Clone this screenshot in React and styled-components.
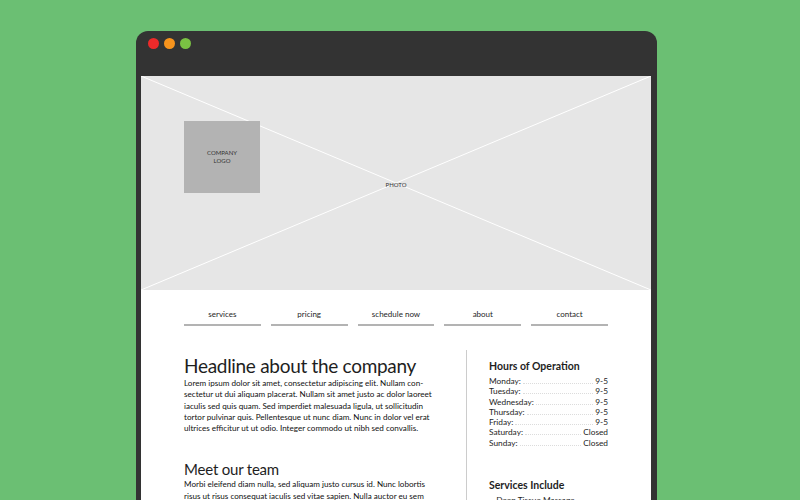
import React from "react";
import styled, { createGlobalStyle } from "styled-components";

const Global = createGlobalStyle`
  html, body {
    margin: 0;
    padding: 0;
    background: #6bbf73;
    overflow: hidden;
  }
  body {
    font-family: Lato, "Open Sans", sans-serif;
    color: #1e1e1e;
  }
`;

const Page = styled.div`
  width: 800px;
  height: 500px;
  padding: 31px 0 0 136px;
  box-sizing: border-box;
`;

const Browser = styled.div`
  width: 521px;
  height: 480px;
  background: #333333;
  border-radius: 12px 12px 0 0;
  padding: 0 6px 0 5px;
  box-sizing: border-box;
  display: flex;
  flex-direction: column;
`;

const TitleBar = styled.div`
  height: 45px;
  display: flex;
  align-items: flex-start;
  gap: 5px;
  padding: 7px 0 0 7px;
  box-sizing: border-box;
`;

const Dot = styled.span`
  width: 11px;
  height: 11px;
  border-radius: 50%;
  background: ${(p) => p.color};
`;

const Screen = styled.div`
  flex: 1;
  background: #fff;
  overflow: hidden;
`;

const Hero = styled.div`
  position: relative;
  height: 214px;
  background: #e6e6e6;
  padding: 45px 0 0 43px;
  box-sizing: border-box;
`;

const Cross = styled.svg`
  position: absolute;
  inset: 0;
  width: 100%;
  height: 100%;
`;

const Logo = styled.div`
  position: relative;
  width: 76px;
  height: 72px;
  background: #b3b3b3;
  display: flex;
  align-items: center;
  justify-content: center;
  text-align: center;
  font-size: 6px;
  line-height: 8px;
  color: #333;
`;

const PhotoLabel = styled.span`
  position: absolute;
  left: 50%;
  top: 105px;
  transform: translateX(-50%);
  font-size: 6px;
  color: #333;
`;

const Nav = styled.nav`
  display: flex;
  gap: 10px;
  padding: 19px 43px 0;
`;

const NavItem = styled.div`
  width: 77px;
  text-align: center;
  font-size: 8px;
  line-height: 10px;
  padding-bottom: 5px;
  border-bottom: 2px solid #b3b3b3;
`;

const Content = styled.div`
  display: flex;
  padding: 24px 43px 0;
`;

const Main = styled.div`
  width: 246px;
  padding: 5px 36px 0 0;
  border-right: 1px solid #cccccc;
`;

const Side = styled.div`
  width: 120px;
  padding: 10px 0 0 22px;
`;

const Headline = styled.h1`
  margin: 0;
  font-weight: 400;
  font-size: 19px;
  letter-spacing: -0.3px;
  line-height: 22px;
  white-space: nowrap;
`;

const SubHead = styled.h2`
  margin: 26px 0 0;
  font-weight: 400;
  font-size: 15px;
  letter-spacing: -0.2px;
  line-height: 18px;
  white-space: nowrap;
`;

const Body = styled.p`
  margin: 1px 0 0;
  font-size: 8.1px;
  line-height: 11.3px;
  white-space: nowrap;
  color: #111;
`;

const SideTitle = styled.h3`
  margin: 0 0 3px;
  font-weight: 700;
  font-size: 10.5px;
  line-height: 13px;
`;

const Hours = styled.div`
  display: flex;
  flex-direction: column;
`;

const HourRow = styled.div`
  display: flex;
  align-items: baseline;
  font-size: 8.3px;
  line-height: 10.3px;
`;

const Leader = styled.span`
  flex: 1;
  margin: 0 2px;
  border-bottom: 1px dotted #dcdcdc;
`;

const ServicesTitle = styled(SideTitle)`
  margin-top: 31px;
`;

const ServiceItem = styled.div`
  font-size: 8.3px;
  line-height: 10px;
  padding-left: 2px;
`;

const hours = [
  ["Monday:", "9-5"],
  ["Tuesday:", "9-5"],
  ["Wednesday:", "9-5"],
  ["Thursday:", "9-5"],
  ["Friday:", "9-5"],
  ["Saturday:", "Closed"],
  ["Sunday:", "Closed"],
];

const navItems = ["services", "pricing", "schedule now", "about", "contact"];

export default function App() {
  return (
    <Page>
      <Global />
      <Browser>
        <TitleBar>
          <Dot color="#ed2a2a" />
          <Dot color="#f7941d" />
          <Dot color="#7ac143" />
        </TitleBar>
        <Screen>
          <Hero>
            <Cross viewBox="0 0 510 214" preserveAspectRatio="none">
              <line x1="0" y1="0" x2="510" y2="214" stroke="#fff" strokeWidth="1" />
              <line x1="510" y1="0" x2="0" y2="214" stroke="#fff" strokeWidth="1" />
            </Cross>
            <Logo>
              COMPANY
              <br />
              LOGO
            </Logo>
            <PhotoLabel>PHOTO</PhotoLabel>
          </Hero>
          <Nav>
            {navItems.map((n) => (
              <NavItem key={n}>{n}</NavItem>
            ))}
          </Nav>
          <Content>
            <Main>
              <Headline>Headline about the company</Headline>
              <Body>
                Lorem ipsum dolor sit amet, consectetur adipiscing elit. Nullam con-
                <br />
                sectetur ut dui aliquam placerat. Nullam sit amet justo ac dolor laoreet
                <br />
                iaculis sed quis quam. Sed imperdiet malesuada ligula, ut sollicitudin
                <br />
                tortor pulvinar quis. Pellentesque ut nunc diam. Nunc in dolor vel erat
                <br />
                ultrices efficitur ut ut odio. Integer commodo ut nibh sed convallis.
              </Body>
              <SubHead>Meet our team</SubHead>
              <Body>
                Morbi eleifend diam nulla, sed aliquam justo cursus id. Nunc lobortis
                <br />
                risus ut risus consequat iaculis sed vitae sapien. Nulla auctor eu sem
              </Body>
            </Main>
            <Side>
              <SideTitle>Hours of Operation</SideTitle>
              <Hours>
                {hours.map(([d, h]) => (
                  <HourRow key={d}>
                    <span>{d}</span>
                    <Leader />
                    <span>{h}</span>
                  </HourRow>
                ))}
              </Hours>
              <ServicesTitle>Services Include</ServicesTitle>
              <ServiceItem>- Deep Tissue Massage</ServiceItem>
            </Side>
          </Content>
        </Screen>
      </Browser>
    </Page>
  );
}
